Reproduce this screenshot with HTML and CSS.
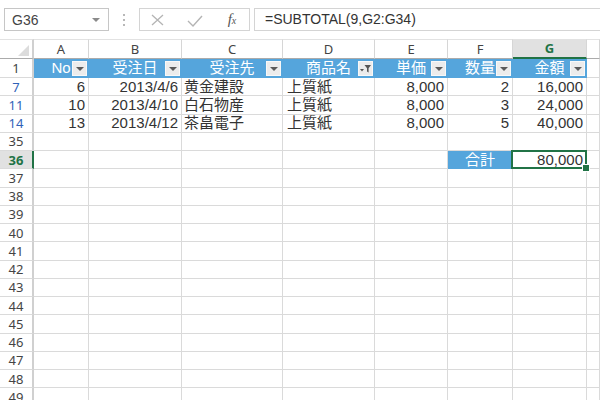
FILE: index.html
```html
<!DOCTYPE html>
<html lang="ja">
<head>
<meta charset="utf-8">
<title>SUBTOTAL</title>
<link rel="stylesheet" href="styles.css">
</head>
<body>
<div class="fbar">
  <div class="namebox"><span>G36</span><span class="caret"></span></div>
  <div class="dots"><i></i><i></i><i></i></div>
  <div class="fx-tools">
    <svg class="ico" width="20" height="20" viewBox="0 0 20 20"><path d="M4 5 L15 15 M15 5 L4 15" stroke="#b4b4b4" stroke-width="1.3" fill="none"/></svg>
    <svg class="ico" width="20" height="20" viewBox="0 0 20 20"><path d="M3 11 L8 16 L17 6" stroke="#b4b4b4" stroke-width="1.4" fill="none"/></svg>
    <span class="fx"><span class="fx-f">f</span><span class="fx-x">x</span></span>
  </div>
  <div class="formula">=SUBTOTAL(9,G2:G34)</div>
</div>

<table class="sheet">
  <thead>
    <tr class="colhead">
      <th class="corner"><span class="tri"></span></th>
      <th class="w-a">A</th>
      <th class="w-b">B</th>
      <th class="w-c">C</th>
      <th class="w-d">D</th>
      <th class="w-e">E</th>
      <th class="w-f">F</th>
      <th class="w-g sel">G</th>
      <th class="w-h"></th>
    </tr>
  </thead>
  <tbody>
    <tr class="r-hdr">
      <th class="rn">1</th>
      <td class="tb">No<span class="fb"><span class="dn"></span></span></td>
      <td class="tb">受注日<span class="fb"><span class="dn"></span></span></td>
      <td class="tb">受注先<span class="fb"><span class="dn"></span></span></td>
      <td class="tb">商品名<span class="fb"><svg width="13" height="13" viewBox="0 0 13 13"><path d="M1 7 H5 L3 9.5 Z" fill="#555"/><path d="M5.5 3 H12 L9.6 6.2 V10.5 L8 9.6 V6.2 Z" fill="#555"/></svg></span></td>
      <td class="tb">単価<span class="fb"><span class="dn"></span></span></td>
      <td class="tb">数量<span class="fb"><span class="dn"></span></span></td>
      <td class="tb">金額<span class="fb"><span class="dn"></span></span></td>
      <td></td>
    </tr>
    <tr>
      <th class="rn flt">7</th>
      <td class="num">6</td><td class="num">2013/4/6</td><td>黄金建設</td><td class="txt">上質紙</td><td class="num">8,000</td><td class="num">2</td><td class="num">16,000</td><td></td>
    </tr>
    <tr>
      <th class="rn flt">11</th>
      <td class="num">10</td><td class="num">2013/4/10</td><td>白石物産</td><td class="txt">上質紙</td><td class="num">8,000</td><td class="num">3</td><td class="num">24,000</td><td></td>
    </tr>
    <tr>
      <th class="rn flt">14</th>
      <td class="num">13</td><td class="num">2013/4/12</td><td>茶畠電子</td><td class="txt">上質紙</td><td class="num">8,000</td><td class="num">5</td><td class="num">40,000</td><td></td>
    </tr>
    <tr><th class="rn">35</th><td></td><td></td><td></td><td></td><td></td><td></td><td></td><td></td></tr>
    <tr>
      <th class="rn cur">36</th>
      <td></td><td></td><td></td><td></td><td></td><td class="tb total">合計</td><td class="num active">80,000</td><td></td>
    </tr>
    <tr><th class="rn">37</th><td></td><td></td><td></td><td></td><td></td><td></td><td></td><td></td></tr>
    <tr><th class="rn">38</th><td></td><td></td><td></td><td></td><td></td><td></td><td></td><td></td></tr>
    <tr><th class="rn">39</th><td></td><td></td><td></td><td></td><td></td><td></td><td></td><td></td></tr>
    <tr><th class="rn">40</th><td></td><td></td><td></td><td></td><td></td><td></td><td></td><td></td></tr>
    <tr><th class="rn">41</th><td></td><td></td><td></td><td></td><td></td><td></td><td></td><td></td></tr>
    <tr><th class="rn">42</th><td></td><td></td><td></td><td></td><td></td><td></td><td></td><td></td></tr>
    <tr><th class="rn">43</th><td></td><td></td><td></td><td></td><td></td><td></td><td></td><td></td></tr>
    <tr><th class="rn">44</th><td></td><td></td><td></td><td></td><td></td><td></td><td></td><td></td></tr>
    <tr><th class="rn">45</th><td></td><td></td><td></td><td></td><td></td><td></td><td></td><td></td></tr>
    <tr><th class="rn">46</th><td></td><td></td><td></td><td></td><td></td><td></td><td></td><td></td></tr>
    <tr><th class="rn">47</th><td></td><td></td><td></td><td></td><td></td><td></td><td></td><td></td></tr>
    <tr><th class="rn">48</th><td></td><td></td><td></td><td></td><td></td><td></td><td></td><td></td></tr>
    <tr><th class="rn">49</th><td></td><td></td><td></td><td></td><td></td><td></td><td></td><td></td></tr>
  </tbody>
</table>
</body>
</html>
```

FILE: styles.css
```css
* { box-sizing: border-box; }
html, body {
  margin: 0;
  padding: 0;
  width: 600px;
  height: 400px;
  overflow: hidden;
  background: #ffffff;
}
body {
  font-family: "Liberation Sans", "Noto Sans CJK JP", sans-serif;
  color: #333333;
}

/* formula bar */
.fbar {
  display: flex;
  align-items: center;
  height: 39px;
  padding: 8px 0 8px 4px;
}
.namebox {
  width: 105px;
  height: 23px;
  border: 1px solid #c6c6c6;
  display: flex;
  align-items: center;
  justify-content: space-between;
  padding: 0 8px 0 7px;
  font-size: 14px;
  color: #444444;
}
.caret {
  width: 0;
  height: 0;
  border-left: 4px solid transparent;
  border-right: 4px solid transparent;
  border-top: 4px solid #8a8a8a;
}
.dots {
  width: 30px;
  display: flex;
  flex-direction: column;
  align-items: center;
  gap: 3px;
}
.dots i {
  display: block;
  width: 2px;
  height: 2px;
  background: #b8b8b8;
}
.fx-tools {
  width: 111px;
  height: 23px;
  border: 1px solid #d4d4d4;
  display: flex;
  align-items: center;
  padding-left: 8px;
  gap: 17px;
}
.ico { display: block; }
.fx {
  width: 20px;
  display: flex;
  justify-content: center;
  align-items: baseline;
  font-family: "Liberation Serif", serif;
  font-style: italic;
  color: #555555;
}
.fx-f { font-size: 15px; }
.fx-x { font-size: 10px; }
.formula {
  flex: 1;
  height: 23px;
  margin-left: 4px;
  border: 1px solid #d4d4d4;
  border-right: none;
  padding-left: 10px;
  font-size: 14px;
  line-height: 21px;
  color: #333333;
  white-space: nowrap;
}

/* sheet */
.sheet {
  border-collapse: separate;
  border-spacing: 0;
  table-layout: fixed;
  width: 600px;
}
.sheet th, .sheet td {
  padding: 0;
  border-right: 1px solid #dadada;
  border-bottom: 1px solid #dadada;
  overflow: hidden;
  white-space: nowrap;
}
.colhead th {
  height: 19px;
  border-top: 1px solid #e2e2e2;
  border-bottom: 1px solid #ababab;
  border-right: 1px solid #d6d6d6;
  font-family: "Noto Sans", sans-serif;
  font-weight: normal;
  font-size: 13px;
  line-height: 17px;
  color: #444444;
  text-align: center;
  background: #ffffff;
}
.colhead th.corner {
  width: 34px;
  position: relative;
  border-right: 2px solid #d0d0d0;
}
.tri {
  position: absolute;
  right: 3px;
  bottom: 2px;
  width: 0;
  height: 0;
  border-left: 11px solid transparent;
  border-bottom: 11px solid #dcdcdc;
}
.w-a { width: 55px; }
.w-b { width: 93px; }
.w-c { width: 101px; }
.w-d { width: 92px; }
.w-e { width: 73px; }
.w-f { width: 65px; }
.w-g { width: 74px; }
.w-h { width: 13px; }
.colhead th.sel {
  background: #e1e1e1;
  color: #217346;
  font-weight: bold;
  border-bottom: 2px solid #217346;
}

.sheet tbody th, .sheet tbody td { height: 18.25px; }
.sheet tbody tr.r-hdr th, .sheet tbody tr.r-hdr td { height: 19px; }
.sheet td {
  font-size: 15px;
  line-height: 16px;
  color: #333333;
  padding: 0 2px;
  vertical-align: middle;
}
.sheet td.num { text-align: right; padding-right: 3px; }
.sheet td.txt { padding-left: 4px; }

th.rn {
  border-right: 2px solid #d0d0d0;
  font-family: "Noto Sans", sans-serif;
  font-weight: normal;
  font-size: 13px;
  line-height: 16px;
  color: #444444;
  text-align: center;
  background: #ffffff;
}
th.rn.flt { color: #2f62b8; }
th.rn.cur {
  background: #e1e1e1;
  color: #217346;
  font-weight: bold;
  border-right: 2px solid #217346;
}

td.tb {
  position: relative;
  background: #55a5dc;
  color: #ffffff;
  text-align: center;
  border-right-color: #55a5dc;
  border-bottom-color: #55a5dc;
}
.fb {
  position: absolute;
  right: 1px;
  top: 2px;
  width: 15px;
  height: 15px;
  background: #ececec;
  border: 1px solid #f8f8f8;
  display: flex;
  align-items: center;
  justify-content: center;
}
.dn {
  width: 0;
  height: 0;
  border-left: 4px solid transparent;
  border-right: 4px solid transparent;
  border-top: 4px solid #5a5a5a;
}
td.total { border-right-color: #dadada; }

.sheet td.active {
  position: relative;
  overflow: visible;
}
td.active::before {
  content: "";
  position: absolute;
  left: -2px;
  top: -1px;
  right: -1px;
  bottom: -1px;
  border: 2px solid #217346;
}
td.active::after {
  content: "";
  position: absolute;
  right: -4px;
  bottom: -4px;
  width: 6px;
  height: 6px;
  background: #217346;
  border: 1px solid #ffffff;
}
```
